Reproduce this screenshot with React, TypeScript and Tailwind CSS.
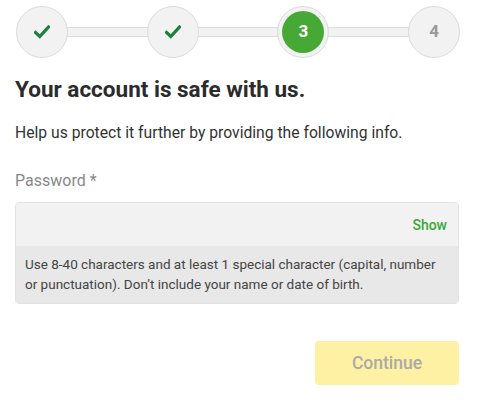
import { Fragment } from 'react'

const steps = [
  { id: 1, state: 'done' },
  { id: 2, state: 'done' },
  { id: 3, state: 'current' },
  { id: 4, state: 'todo' },
]

function Check() {
  return (
    <svg width="16" height="14" viewBox="0 0 16 14" fill="none">
      <path d="M1.5 7.5 L5.8 11.5 L14.5 2" stroke="#1b7f3d" strokeWidth="3.2" strokeLinecap="square" />
    </svg>
  )
}

export default function App() {
  return (
    <div className="w-[480px] h-[405px] bg-white px-[15px] pt-[6px] font-['Roboto',sans-serif] text-[#333]">
      {/* stepper */}
      <div className="flex items-center w-[445px] pl-px">
        {steps.map((s, i) => (
          <Fragment key={s.id}>
            {i > 0 && <div className="flex-1 h-[10px] -mx-px bg-[#f2f2f2] border-y border-[#dedede]" />}
            <div className="relative z-10 w-[52px] h-[52px] rounded-full border border-[#dcdcdc] bg-[#f2f2f2] flex items-center justify-center">
              {s.state === 'done' && <Check />}
              {s.state === 'current' && (
                <div className="w-[42px] h-[42px] rounded-full bg-[#46a935] flex items-center justify-center text-white font-bold text-[17px]">3</div>
              )}
              {s.state === 'todo' && <span className="text-[#999] font-bold text-[17px]">{s.id}</span>}
            </div>
          </Fragment>
        ))}
      </div>

      <h1 className="mt-[17px] text-[22.5px] leading-[28px] font-bold text-[#2b2b2b]">Your account is safe with us.</h1>
      <p className="mt-[19px] text-[15.7px] leading-[22px] text-[#333]">Help us protect it further by providing the following info.</p>

      <label className="block mt-[26px] text-[16px] leading-[22px] text-[#888]">Password *</label>

      <div className="mt-[10px] w-[444px] rounded-[4px] border border-[#e3e3e3] overflow-hidden">
        <div className="h-[43px] bg-[#f2f2f2] flex items-center justify-end pr-[11px]">
          <span className="text-[14px] font-medium text-[#3aa935] mt-[2px]">Show</span>
        </div>
        <div className="bg-[#e8e8e8] px-[9px] pt-[8px] pb-[9px] text-[13.5px] leading-[20px] text-[#444]">
          Use 8-40 characters and at least 1 special character (capital, number or punctuation). Don’t include your name or date of birth.
        </div>
      </div>

      <div className="flex justify-end w-[444px] mt-[37px]">
        <button className="w-[144px] h-[44px] rounded-[4px] bg-[#fff1a3] text-[#aaa] text-[17.5px] font-medium">Continue</button>
      </div>
    </div>
  )
}
